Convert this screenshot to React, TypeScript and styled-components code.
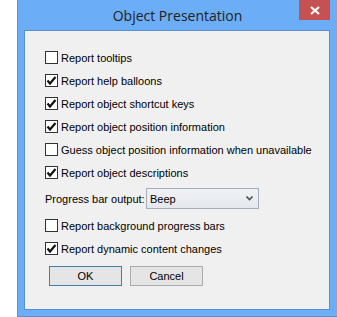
import styled, { createGlobalStyle } from "styled-components";

const GlobalStyle = createGlobalStyle`
  html, body {
    margin: 0;
    padding: 0;
    background: #ffffff;
  }
`;

const OPTIONS_TOP = [
  { label: "Report tooltips", checked: false },
  { label: "Report help balloons", checked: true },
  { label: "Report object shortcut keys", checked: true },
  { label: "Report object position information", checked: true },
  { label: "Guess object position information when unavailable", checked: false },
  { label: "Report object descriptions", checked: true },
];

const OPTIONS_BOTTOM = [
  { label: "Report background progress bars", checked: false },
  { label: "Report dynamic content changes", checked: true },
];

function CheckIcon() {
  return (
    <svg width="11" height="11" viewBox="0 0 11 11">
      <path d="M1.5 5.5 L4 8.5 L9.5 2" fill="none" stroke="#111" strokeWidth="2.2" />
    </svg>
  );
}

function CheckRow({ label, checked }: { label: string; checked: boolean }) {
  return (
    <Row>
      <Box>{checked && <CheckIcon />}</Box>
      <span>{label}</span>
    </Row>
  );
}

export default function App() {
  return (
    <>
      <GlobalStyle />
      <Page>
        <Frame>
          <TitleBar>
            <Title>Object Presentation</Title>
            <CloseButton>
              <svg width="10" height="9" viewBox="0 0 10 9">
                <path d="M1 1 L9 8 M9 1 L1 8" stroke="#fff" strokeWidth="2.2" />
              </svg>
            </CloseButton>
          </TitleBar>
          <Content>
            <List>
              {OPTIONS_TOP.map((o) => (
                <CheckRow key={o.label} {...o} />
              ))}
            </List>
            <SelectRow>
              <Label>Progress bar output:</Label>
              <Select>
                <span>Beep</span>
                <svg width="7" height="5" viewBox="0 0 7 5">
                  <path d="M0.5 0.5 L3.5 3.5 L6.5 0.5" fill="none" stroke="#555" strokeWidth="1.6" />
                </svg>
              </Select>
            </SelectRow>
            <List>
              {OPTIONS_BOTTOM.map((o) => (
                <CheckRow key={o.label} {...o} />
              ))}
            </List>
            <Buttons>
              <Button $focused>OK</Button>
              <Button>Cancel</Button>
            </Buttons>
          </Content>
        </Frame>
      </Page>
    </>
  );
}

const Page = styled.div`
  width: 337px;
  height: 317px;
  padding-left: 17px;
  box-sizing: border-box;
  overflow: hidden;
`;

const Frame = styled.div`
  width: 320px;
  height: 317px;
  box-sizing: border-box;
  background: #6badf6;
  border-left: 1px solid #5592d8;
  border-bottom: 1px solid #5592d8;
  display: flex;
  flex-direction: column;
`;

const TitleBar = styled.div`
  height: 30px;
  flex-shrink: 0;
  position: relative;
  display: flex;
  justify-content: center;
`;

const Title = styled.div`
  font-family: "Open Sans", "Noto Sans", sans-serif;
  font-size: 14px;
  color: #222;
  line-height: 31px;
`;

const CloseButton = styled.div`
  position: absolute;
  top: 0;
  right: 7px;
  width: 31px;
  height: 20px;
  background: #c75050;
  display: flex;
  align-items: center;
  justify-content: center;
`;

const Content = styled.div`
  margin: 0 7px 6px 6px;
  flex: 1;
  background: #f0f0f0;
  border: 1px solid #5a8fcc;
  padding: 15px 0 0 20px;
  font-family: "Liberation Sans", Arial, sans-serif;
  font-size: 11px;
  color: #000;
  white-space: nowrap;
`;

const List = styled.div`
  display: flex;
  flex-direction: column;
`;

const Row = styled.div`
  height: 23px;
  display: flex;
  align-items: center;
  gap: 3px;
`;

const Box = styled.div`
  width: 11px;
  height: 11px;
  border: 1px solid #333;
  background: #fff;
  display: flex;
  align-items: center;
  justify-content: center;
`;

const SelectRow = styled.div`
  display: flex;
  align-items: center;
  margin: 4px 0 5px;
`;

const Label = styled.span`
  width: 101px;
`;

const Select = styled.div`
  width: 113px;
  height: 21px;
  box-sizing: border-box;
  border: 1px solid #a3adbc;
  background: linear-gradient(#f0f2f5, #e4e8ee);
  display: flex;
  align-items: center;
  justify-content: space-between;
  padding: 0 5px 0 3px;
`;

const Buttons = styled.div`
  display: flex;
  gap: 8px;
  margin: 6px 0 0 4px;
`;

const Button = styled.div<{ $focused?: boolean }>`
  width: 73px;
  height: 20px;
  box-sizing: border-box;
  border: 1px solid ${(p) => (p.$focused ? "#3c7fb1" : "#acacac")};
  background: #e5e5e5;
  display: flex;
  align-items: center;
  justify-content: center;
`;
